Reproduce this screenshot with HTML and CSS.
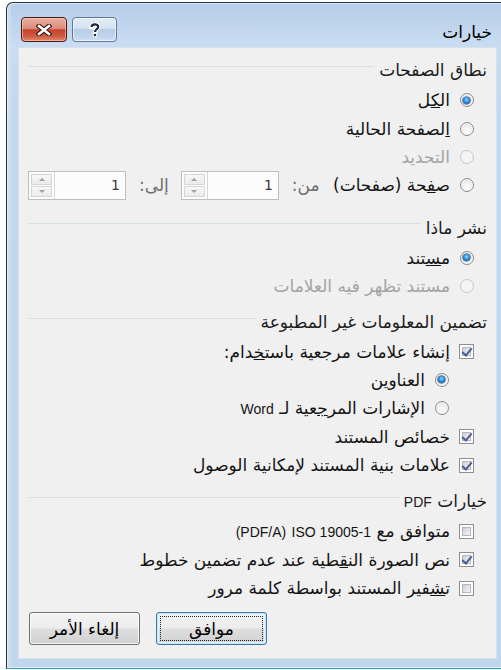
FILE: index.html
```html
<!DOCTYPE html>
<html lang="ar">
<head>
<meta charset="utf-8">
<title>خيارات</title>
<link rel="stylesheet" href="styles.css">
</head>
<body>
<div class="window" dir="rtl">
  <div class="titlebar">
    <span class="title">خيارات</span>
    <div class="caption">
      <span class="cap-btn help">
        <svg width="14" height="16" viewBox="0 0 14 16">
          <path class="halo" d="M3.6 5 C3.6 1.6 10.2 1.4 10.2 4.8 C10.2 7.2 7 7.3 7 10" />
          <path class="ink" d="M3.6 5 C3.6 1.6 10.2 1.4 10.2 4.8 C10.2 7.2 7 7.3 7 10" />
          <rect x="5.3" y="11.4" width="3.4" height="3.2" fill="#1c2636" stroke="#fff" stroke-width="1"/>
        </svg>
      </span>
      <span class="cap-btn close">
        <svg width="16" height="12" viewBox="0 0 16 12">
          <path class="halo" d="M3 2 L13 10 M13 2 L3 10" />
          <path class="xink" d="M3 2 L13 10 M13 2 L3 10" />
        </svg>
      </span>
    </div>
  </div>

  <div class="client">
    <section class="group">
      <div class="group-head"><span>نطاق الصفحات</span></div>
      <div class="row"><span class="slot"><span class="radio on"></span></span><span class="label">ال<span class="key">ك</span>ل</span></div>
      <div class="row"><span class="slot"><span class="radio"></span></span><span class="label"><span class="key">ا</span>لصفحة الحالية</span></div>
      <div class="row off"><span class="slot"><span class="radio"></span></span><span class="label">التحديد</span></div>
      <div class="row"><span class="slot"><span class="radio"></span></span><span class="label">ص<span class="key">ف</span>حة (صفحات)</span>
        <div class="range">
          <span class="range-label">من:</span>
          <div class="spin"><div class="spin-btns"><span class="up"></span><span class="down"></span></div><span class="spin-val">1</span></div>
          <span class="range-label">إلى:</span>
          <div class="spin"><div class="spin-btns"><span class="up"></span><span class="down"></span></div><span class="spin-val">1</span></div>
        </div>
      </div>
    </section>

    <section class="group g2">
      <div class="group-head"><span>نشر ماذا</span></div>
      <div class="row"><span class="slot"><span class="radio on"></span></span><span class="label">م<span class="key">س</span>تند</span></div>
      <div class="row off"><span class="slot"><span class="radio"></span></span><span class="label">مستند تظهر فيه العلامات</span></div>
    </section>

    <section class="group g3">
      <div class="group-head"><span>تضمين المعلومات غير المطبوعة</span></div>
      <div class="row"><span class="slot"><span class="cb on"></span></span><span class="label">إنشاء علامات مرجعية باست<span class="key">خ</span>دام:</span></div>
      <div class="row sub"><span class="slot"><span class="radio on"></span></span><span class="label">العناوين</span></div>
      <div class="row sub"><span class="slot"><span class="radio"></span></span><span class="label">الإشارات المر<span class="key">ج</span>عية لـ <span class="lat">Word</span></span></div>
      <div class="row"><span class="slot"><span class="cb on"></span></span><span class="label">خصائص المستند</span></div>
      <div class="row"><span class="slot"><span class="cb on"></span></span><span class="label">علامات بن<span class="key">ي</span>ة المستند لإمكانية الوصول</span></div>
    </section>

    <section class="group g4">
      <div class="group-head"><span>خيارات <span class="lat">PDF</span></span></div>
      <div class="row"><span class="slot"><span class="cb"></span></span><span class="label">متوافق مع <bdi dir="ltr" class="lat">ISO 19005-1</bdi> <bdi dir="ltr" class="lat">(PDF/A)</bdi></span></div>
      <div class="row"><span class="slot"><span class="cb on"></span></span><span class="label">نص الصورة الن<span class="key">ق</span>طية عند عدم تضمين خطوط</span></div>
      <div class="row"><span class="slot"><span class="cb"></span></span><span class="label">ت<span class="key">ش</span>فير المستند بواسطة كلمة مرور</span></div>
    </section>

    <div class="actions">
      <span class="btn default"><span>موافق</span></span>
      <span class="btn">إلغاء الأمر</span>
    </div>
  </div>
</div>
</body>
</html>
```

FILE: styles.css
```css
* { box-sizing: border-box; }

html, body {
  margin: 0;
  padding: 0;
  overflow: hidden;
  background: #ffffff;
}

body {
  font-family: "DejaVu Sans", sans-serif;
  font-size: 17px;
  color: #141414;
}

/* Latin runs inside the Arabic labels */
.lat {
  font-family: "Liberation Sans", "DejaVu Sans", sans-serif;
  font-size: 14px;
}

/* window frame */
.window {
  margin: 2px 0 0 6px;
  width: 503px;
  height: 667px;
  border: 1px solid #26323e;
  border-bottom-color: #2aa6bb;
  border-radius: 7px 7px 0 0;
  background: linear-gradient(#b6cee8, #c9dcf1 44px, #c2d8ee 120px, #bfd6ed);
  box-shadow: 0 1px 0 #0d2430, inset 0 0 0 1px rgba(255, 255, 255, 0.45), inset 3px 0 0 1px rgba(225, 238, 250, 0.35);
  display: flex;
  flex-direction: column;
}

.titlebar {
  height: 44px;
  flex: none;
  display: flex;
  align-items: flex-start;
  padding: 14px 16px 0 14px;
}

.title {
  margin-top: 2px;
  line-height: 26px;
  font-size: 17px;
  color: #000;
}

.caption {
  margin-right: auto;
  display: flex;
  gap: 5px;
}

.cap-btn {
  width: 46px;
  height: 25px;
  border-radius: 4px;
  display: flex;
  align-items: center;
  justify-content: center;
}

.cap-btn.help {
  width: 45px;
  border: 1px solid #61789a;
  background: linear-gradient(#e4edf8, #d3e1f1 45%, #b7cde6 50%, #c3d7ee 85%, #d6e4f4);
  box-shadow: inset 0 0 0 1px rgba(255, 255, 255, 0.55);
}

.cap-btn.close {
  border: 1px solid #4a1a12;
  background: linear-gradient(#eab0a2, #dd8d7b 45%, #c4432d 52%, #cf5b43 80%, #e58b72);
  box-shadow: inset 0 0 0 1px rgba(255, 220, 210, 0.5);
}

.halo {
  fill: none;
  stroke: #ffffff;
  stroke-width: 4.4;
  stroke-linecap: square;
}

.ink {
  fill: none;
  stroke: #1c2636;
  stroke-width: 2.2;
  stroke-linecap: butt;
}

.close .halo {
  stroke: #3b1610;
  stroke-width: 4.8;
}

.xink {
  fill: none;
  stroke: #ffffff;
  stroke-width: 2.6;
  stroke-linecap: square;
}

/* dialog client area */
.client {
  margin: 0 11px;
  height: 612px;
  flex: none;
  border: 1px solid #d6e1ec;
  background: #f0f0f0;
  padding: 12px 9px 0;
}

.group-head {
  height: 20px;
  display: flex;
  align-items: center;
  gap: 5px;
  margin-bottom: 6px;
  color: #1b1b1b;
  white-space: nowrap;
}

.group-head::after {
  content: "";
  flex: 1;
  height: 1px;
  margin-bottom: 8px;
  background: #d5dfe6;
}

.g2 { margin-top: 18px; }
.g3 { margin-top: 12px; }
.g3 .group-head { margin-bottom: 5px; }
.g4 { margin-top: 12px; }

.row {
  height: 28.4px;
  display: flex;
  align-items: center;
  gap: 8px;
  padding-right: 12px;
}

.row.sub { padding-right: 37px; }

.slot {
  width: 17px;
  flex: none;
  display: flex;
  justify-content: center;
}

.label { white-space: nowrap; }

.key { text-decoration: underline; }

.row.off .label { color: #a3a3a3; }

/* radio buttons */
.radio {
  position: relative;
  width: 14px;
  height: 14px;
  border-radius: 50%;
  border: 1px solid #8c8c8c;
  background: radial-gradient(circle at 50% 65%, #fefefe 0, #ececec 55%, #cdcdcd 100%);
  box-shadow: inset 0 0 0 1px #f7f7f7;
}

.radio.on::after {
  content: "";
  position: absolute;
  inset: 2.5px;
  border-radius: 50%;
  background: radial-gradient(circle at 50% 40%, #a9dcff 0, #3195e6 40%, #0f55a8 85%);
  box-shadow: 0 0 0 0.6px #0c3a74;
}

.row.off .radio {
  border-color: #c6c6c6;
  background: #f5f5f5;
  box-shadow: none;
}

/* check boxes */
.cb {
  position: relative;
  width: 15px;
  height: 15px;
  border: 1px solid #8e8f8f;
  background: #fdfdfd;
  padding: 2px;
  display: flex;
}

.cb::before {
  content: "";
  flex: 1;
  border: 1px solid #b3b8be;
  background: linear-gradient(135deg, #cdd1d7, #f4f4f5);
}

.cb.on::after {
  content: "";
  position: absolute;
  left: 4px;
  top: 1px;
  width: 4px;
  height: 8px;
  border-right: 2px solid #4a5d96;
  border-bottom: 2px solid #4a5d96;
  transform: rotate(40deg);
}

/* page range spin boxes */
.range {
  margin-right: auto;
  display: flex;
  align-items: center;
  gap: 12px;
}

.range-label {
  color: #6f6f6f;
  margin-left: 1px;
}

.spin {
  direction: ltr;
  width: 98px;
  height: 29px;
  border: 1px solid #bebebe;
  background: #fcfcfc;
  display: flex;
}

.spin-btns {
  width: 26px;
  border-right: 1px solid #d6d6d6;
  display: flex;
  flex-direction: column;
  padding: 2px;
  gap: 1px;
}

.spin-btns span {
  flex: 1;
  border: 1px solid #d6d6d6;
  background: linear-gradient(#f7f7f7, #ebebeb);
  display: flex;
  align-items: center;
  justify-content: center;
}

.spin-btns .up::before,
.spin-btns .down::before {
  content: "";
  border-left: 3px solid transparent;
  border-right: 3px solid transparent;
}

.spin-btns .up::before { border-bottom: 3px solid #a2a2a2; }
.spin-btns .down::before { border-top: 3px solid #a2a2a2; }

.spin-val {
  flex: 1;
  text-align: right;
  padding-right: 5px;
  line-height: 27px;
  font-size: 14px;
  color: #3a3a3a;
}

/* command buttons */
.actions {
  margin-top: 10px;
  display: flex;
  justify-content: flex-end;
  gap: 16px;
  padding-left: 1px;
}

.btn {
  position: relative;
  width: 111px;
  height: 33px;
  border: 1px solid #707070;
  border-radius: 3px;
  background: linear-gradient(#f3f3f3, #ececec 48%, #dedede 52%, #d0d0d0);
  box-shadow: inset 0 0 0 1px rgba(255, 255, 255, 0.75);
  display: flex;
  align-items: center;
  justify-content: center;
  color: #000;
}

.btn.default {
  border-color: #3d7bad;
  box-shadow: inset 0 0 0 1px #bfe3f7, inset 0 0 0 2px #e6f4fc;
}

.btn.default::after {
  content: "";
  position: absolute;
  inset: 3px;
  border: 1px dotted #222;
}
```
